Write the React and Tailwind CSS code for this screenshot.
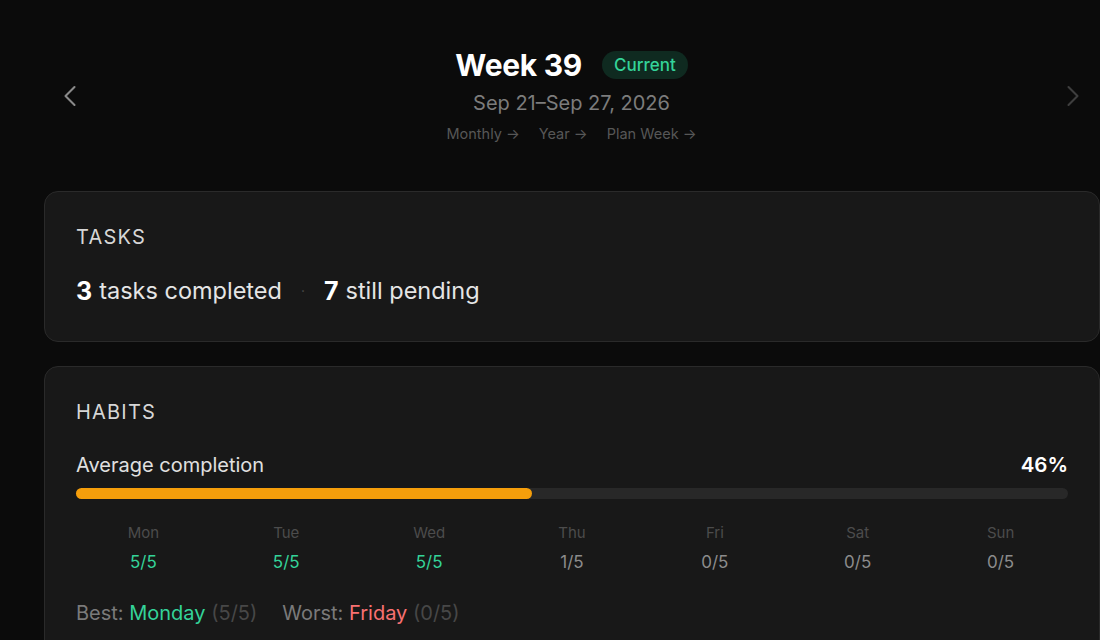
import React from 'react';
import { ChevronLeft, ChevronRight } from 'lucide-react';

const days = [
  { label: 'Mon', done: 5 },
  { label: 'Tue', done: 5 },
  { label: 'Wed', done: 5 },
  { label: 'Thu', done: 1 },
  { label: 'Fri', done: 0 },
  { label: 'Sat', done: 0 },
  { label: 'Sun', done: 0 },
];

const Card = ({ title, children }) => (
  <section className="rounded-[14px] border border-[#2a2a2a] bg-[#181818] px-[31px] pt-[33px] pb-[34px]">
    <h2 className="text-[20px] leading-6 tracking-[0.06em] text-[#d6d6d6] uppercase">{title}</h2>
    {children}
  </section>
);

export default function App() {
  const avg = 46;

  return (
    <div className="min-h-screen bg-[#0b0b0b] pl-[44px] font-['Inter','Noto_Sans',sans-serif] text-white overflow-hidden">
      {/* week header */}
      <header className="flex items-center justify-between pt-[47px] pb-[47px]">
        <button className="ml-[8px] text-[#8a8a8a]">
          <ChevronLeft className="w-9 h-9" strokeWidth={1.4} />
        </button>
        <div className="flex flex-col items-center">
          <div className="flex items-center gap-[20px]">
            <h1 className="text-[30px] leading-9 font-bold tracking-[-0.01em]">Week 39</h1>
            <span className="rounded-full bg-[#0f2a20] px-[12px] py-[2px] text-[17px] leading-6 font-medium text-[#34d399]">Current</span>
          </div>
          <p className="mt-[6px] text-[20px] leading-7 text-[#7c7c7c]">Sep 21–Sep 27, 2026</p>
          <nav className="mt-[7px] flex gap-[19px] text-[14.5px] leading-5 text-[#575757]">
            <a>Monthly →</a>
            <a>Year →</a>
            <a>Plan Week →</a>
          </nav>
        </div>
        <button className="mr-[9px] text-[#3e3e3e]">
          <ChevronRight className="w-9 h-9" strokeWidth={1.4} />
        </button>
      </header>

      <div className="flex flex-col gap-[24px]">
        <Card title="Tasks">
          <p className="mt-[26px] flex items-center text-[23.5px] leading-8 text-[#e5e5e5]">
            <span className="text-[25px] font-bold text-white mr-[7px]">3</span>
            tasks completed
            <span className="mx-[19px] text-[#4a4a4a] text-[14px]">·</span>
            <span className="text-[25px] font-bold text-white mr-[7px]">7</span>
            still pending
          </p>
        </Card>

        <Card title="Habits">
          <div className="mt-[29px] flex items-center justify-between text-[20px] leading-6">
            <span className="text-[#e0e0e0]">Average completion</span>
            <span className="text-[20.5px] font-semibold text-white">{avg}%</span>
          </div>
          <div className="mt-[11px] h-[11px] rounded-full bg-[#282828]">
            <div className="h-full rounded-full bg-[#f59e0b]" style={{ width: `${avg}%` }} />
          </div>
          <div className="mt-[24px] grid grid-cols-7 gap-2 text-center">
            {days.map((d) => (
              <div key={d.label} className="flex flex-col items-center">
                <span className="text-[15px] leading-5 text-[#4c4c4c]">{d.label}</span>
                <span className={`mt-[7px] text-[17px] leading-6 ${d.done === 5 ? 'text-[#34d399]' : 'text-[#8c8c8c]'}`}>{d.done}/5</span>
              </div>
            ))}
          </div>
          <p className="mt-[25px] text-[20px] leading-7">
            <span className="text-[#7a7a7a]">Best: </span>
            <span className="text-[#34d399]">Monday</span>
            <span className="text-[#474747]"> (5/5)</span>
            <span className="ml-[25px] text-[#7a7a7a]">Worst: </span>
            <span className="text-[#f87171]">Friday</span>
            <span className="text-[#474747]"> (0/5)</span>
          </p>
        </Card>
      </div>
    </div>
  );
}
